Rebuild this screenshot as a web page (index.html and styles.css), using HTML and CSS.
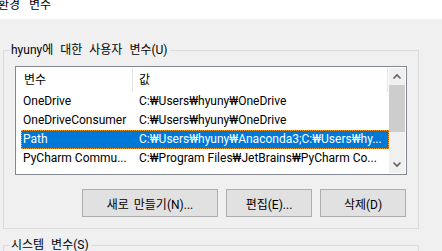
FILE: index.html
```html
<!DOCTYPE html>
<html lang="ko">
<head>
<meta charset="utf-8">
<title>환경 변수</title>
<link rel="stylesheet" href="styles.css">
</head>
<body>
<div class="titlebar"><div class="title">환경 변수</div></div>
<fieldset class="group">
  <legend class="group-label">hyuny에 대한 사용자 변수(U)</legend>
  <div class="listview">
    <div class="list-main">
      <div class="header">
        <div class="hcell hcol1">변수</div>
        <div class="hsep"></div>
        <div class="hcell hcol2">값</div>
        <div class="hsep"></div>
      </div>
      <div class="rows">
        <div class="row"><div class="cell c1">OneDrive</div><div class="cell c2">C:₩Users₩hyuny₩OneDrive</div></div>
        <div class="row"><div class="cell c1">OneDriveConsumer</div><div class="cell c2">C:₩Users₩hyuny₩OneDrive</div></div>
        <div class="row selected"><div class="cell c1">Path</div><div class="cell c2">C:₩Users₩hyuny₩Anaconda3;C:₩Users₩hy...</div></div>
        <div class="row"><div class="cell c1">PyCharm Commu...</div><div class="cell c2">C:₩Program Files₩JetBrains₩PyCharm Co...</div></div>
      </div>
    </div>
    <div class="scrollbar">
      <div class="sb-btn"><svg width="16" height="17" viewBox="0 0 16 17"><polyline points="4.5,10.5 8,7 11.5,10.5" fill="none" stroke="#606060" stroke-width="1.6"/></svg></div>
      <div class="sb-track"><div class="sb-thumb"></div></div>
      <div class="sb-btn"><svg width="16" height="17" viewBox="0 0 16 17"><polyline points="4.5,6.5 8,10 11.5,6.5" fill="none" stroke="#606060" stroke-width="1.6"/></svg></div>
    </div>
  </div>
  <div class="buttons">
    <button class="btn btn-new">새로 만들기(N)...</button>
    <button class="btn btn-edit">편집(E)...</button>
    <button class="btn btn-del">삭제(D)</button>
  </div>
</fieldset>
<fieldset class="group group2">
  <legend class="group-label group2-label">시스템 변수(S)</legend>
</fieldset>
</body>
</html>
```
FILE: styles.css
```css
html, body {
  margin: 0;
  padding: 0;
}
body {
  width: 442px;
  height: 251px;
  overflow: hidden;
  background: #f0f0f0;
  font-family: Roboto, "Noto Sans CJK KR", sans-serif;
  font-size: 12px;
  color: #000;
}
.titlebar {
  height: 19px;
  background: #fff;
  overflow: hidden;
}
.title {
  margin-top: -1px;
  margin-left: -2px;
  line-height: 12px;
  word-spacing: 6px;
  white-space: nowrap;
}
.group {
  box-sizing: border-box;
  width: 416px;
  margin: 23px 0 0 3px;
  padding: 8px 11px 11px 11px;
  border: 1px solid #dcdcdc;
  min-width: 0;
}
.group-label {
  line-height: 16px;
  padding: 0 2px 0 1px;
  margin-left: -5px;
  white-space: nowrap;
  word-spacing: 4px;
}
.group2 {
  margin-top: 9px;
  padding: 0 11px;
}
.group2-label {
  line-height: 14px;
}
.listview {
  height: 105px;
  border: 1px solid #828790;
  padding: 1px;
  background: #fff;
  display: flex;
  overflow: hidden;
}
.list-main {
  width: 372px;
  overflow: hidden;
}
.header {
  height: 24px;
  display: flex;
  line-height: 24px;
}
.hcell {
  white-space: nowrap;
  overflow: hidden;
}
.hcol1 {
  width: 108px;
  padding-left: 7px;
}
.hcol2 {
  width: 248px;
  padding-left: 6px;
}
.hsep {
  width: 1px;
  background: #e5e5e5;
}
.rows {
  margin-left: 4px;
  width: 368px;
}
.row {
  display: flex;
  height: 19px;
  line-height: 19px;
}
.cell {
  white-space: nowrap;
  overflow: hidden;
}
.c1 {
  width: 110px;
  padding-left: 2px;
}
.c2 {
  width: 250px;
  padding-left: 6px;
}
.row.selected {
  background: #0078d7;
  color: #fff;
  outline: 1px dotted #ff9c28;
  outline-offset: -1px;
}
.scrollbar {
  width: 16px;
  background: #f0f0f0;
  display: flex;
  flex-direction: column;
}
.sb-btn {
  height: 17px;
  display: flex;
}
.sb-track {
  flex: 1;
}
.sb-thumb {
  height: 47px;
  background: #cdcdcd;
}
.buttons {
  display: flex;
  justify-content: flex-end;
  gap: 8px;
  margin-top: 14px;
  padding-right: 1px;
}
.btn {
  box-sizing: border-box;
  height: 28px;
  background: #e1e1e1;
  border: 1px solid #adadad;
  font-family: Roboto, "Noto Sans CJK KR", sans-serif;
  font-size: 12px;
  color: #000;
  padding: 0;
  margin: 0;
  word-spacing: 2px;
}
.btn-new { width: 136px; }
.btn-edit { width: 86px; }
.btn-del { width: 86px; }
```
